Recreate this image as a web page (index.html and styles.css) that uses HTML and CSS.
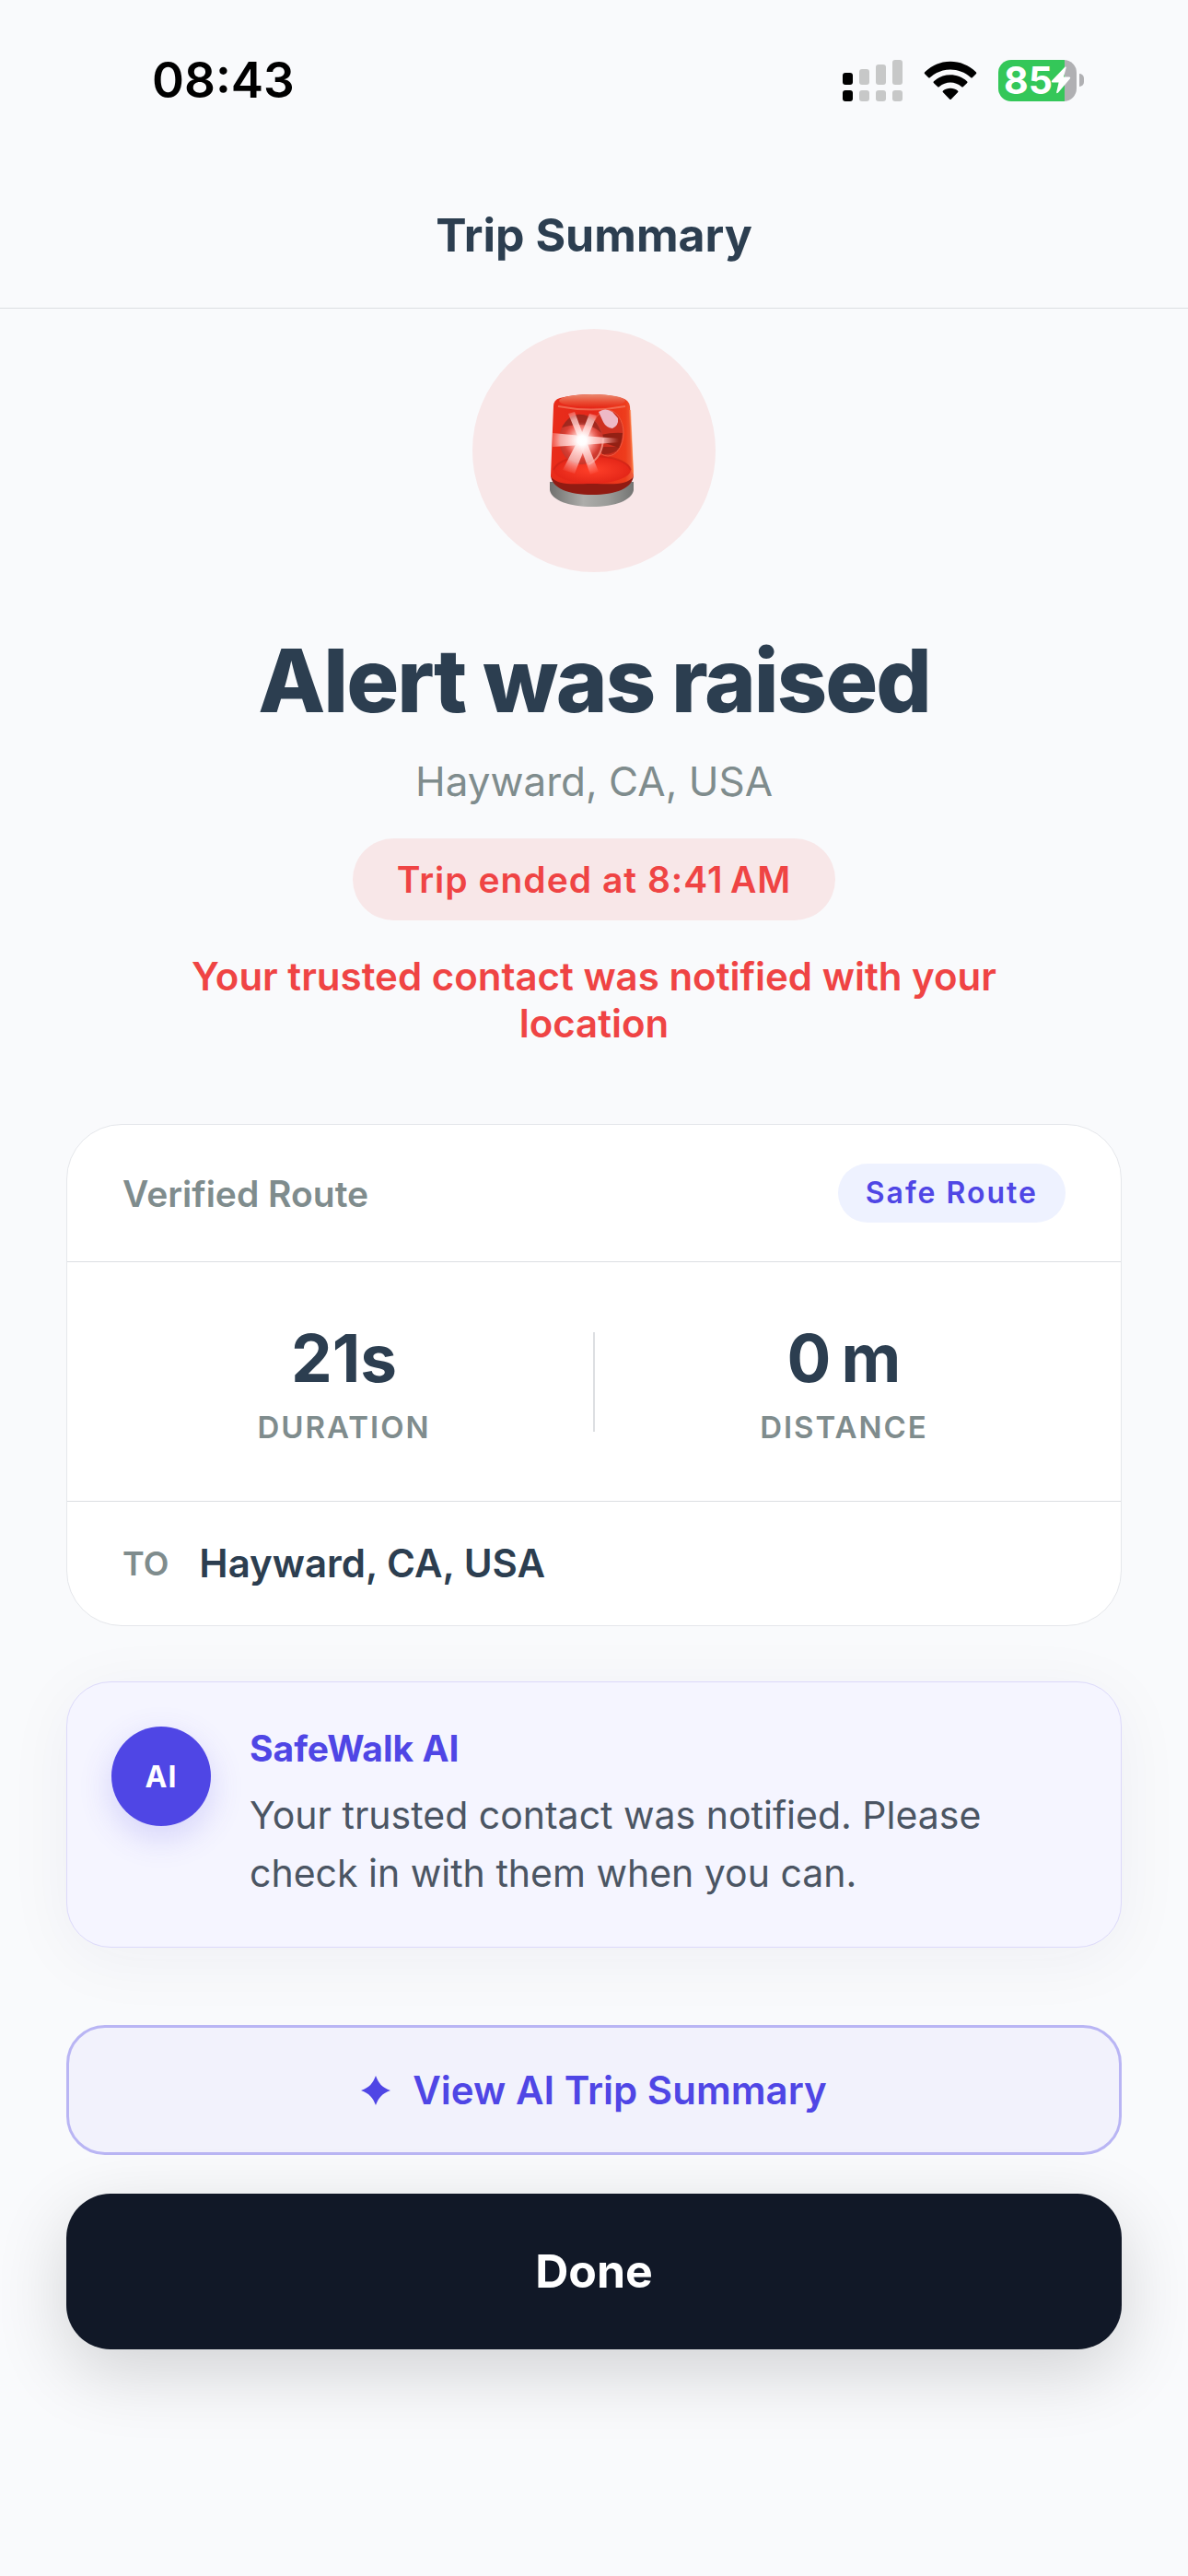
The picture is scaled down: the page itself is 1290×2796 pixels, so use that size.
FILE: index.html
```
<!DOCTYPE html>
<html lang="en">
<head>
    <meta charset="UTF-8">
    <meta name="viewport" content="width=device-width, initial-scale=1.0">
    <title>Trip Summary</title>
    <link rel="stylesheet" href="styles.css">
</head>
<body>
    <!-- Status Bar -->
    <div class="status-bar">
        <span class="time">08:43</span>
        <div class="status-icons">
            <svg class="signal" width="65" height="45" viewBox="0 0 65 45">
                <g fill="#000">
                    <rect x="0" y="14" width="11" height="13" rx="3"/>
                    <rect x="0" y="33" width="11" height="12" rx="3"/>
                </g>
                <g fill="#c7c8c8">
                    <rect x="18" y="10" width="11" height="17" rx="3"/>
                    <rect x="36" y="5" width="11" height="22" rx="3"/>
                    <rect x="54" y="0" width="11" height="27" rx="3"/>
                    <rect x="18" y="33" width="11" height="12" rx="3"/>
                    <rect x="36" y="33" width="11" height="12" rx="3"/>
                    <rect x="54" y="33" width="11" height="12" rx="3"/>
                </g>
            </svg>
            <svg class="wifi" width="58" height="43" viewBox="0 0 58 43">
                <path d="M1.2 12.2C16.500 -3.200 41.500 -3.200 56.800 12.200Q57.800 13.200 56.800 14.200L53 18Q52 19 51 18C38.500 6.500 19.500 6.500 7 18Q6 19 5 18L1.200 14.200Q.200 13.200 1.200 12.200Z"/>
                <path d="M11 22.200C21 13 37 13 47 22.200Q48 23.200 47 24.200L43 28Q42 29 41 28C34 22 24 22 17 28Q16 29 15 28L11 24.200Q10 23.200 11 22.200Z"/>
                <path d="M21 32.400C25.500 28.700 32.500 28.700 37 32.400Q38 33.300 37 34.300L30 41.500Q29 42.500 28 41.500L21 34.300Q20 33.300 21 32.400Z"/>
            </svg>
            <div class="battery">
                <div class="battery-body">
                    <span>85</span>
                    <svg width="22" height="30" viewBox="0 0 22 30"><path d="M15.500.600Q17 0 16.700 1.600L14 11.500H20.400Q22 12 20.800 13.600L7.800 28.800Q6 30 6.200 28L8.600 17.500H1.600Q0 17 1.200 15.400Z" fill="#fff"/></svg>
                </div>
                <div class="battery-tip"></div>
            </div>
        </div>
    </div>

    <!-- Header Section -->
    <header>
        <h1>Trip Summary</h1>
    </header>

    <main>
        <!-- Alert Section -->
        <section class="hero">
            <div class="hero-icon">
                <svg width="94" height="124" viewBox="0 0 94 124">
                    <defs>
                        <linearGradient id="glass" x1="0" x2="1" y1="0" y2="0">
                            <stop offset="0" stop-color="#e92d1a"/>
                            <stop offset=".5" stop-color="#e5271a"/>
                            <stop offset=".9" stop-color="#ee3c1c"/>
                            <stop offset="1" stop-color="#f0603e"/>
                        </linearGradient>
                        <linearGradient id="cap" x1="0" x2="0" y1="0" y2="1">
                            <stop offset="0" stop-color="#ea8a70"/>
                            <stop offset=".6" stop-color="#ea4c33"/>
                            <stop offset="1" stop-color="#e52b18"/>
                        </linearGradient>
                        <linearGradient id="base" x1="0" x2="1" y1="0" y2="0">
                            <stop offset="0" stop-color="#70706e"/>
                            <stop offset=".4" stop-color="#adadaa"/>
                            <stop offset=".7" stop-color="#9a9b98"/>
                            <stop offset="1" stop-color="#747573"/>
                        </linearGradient>
                        <radialGradient id="floor">
                            <stop offset="0" stop-color="#ff4029"/>
                            <stop offset="1" stop-color="#e42618"/>
                        </radialGradient>
                        <radialGradient id="lamp">
                            <stop offset="0" stop-color="#ff9d92"/>
                            <stop offset=".6" stop-color="#e8473c"/>
                            <stop offset="1" stop-color="#c5352a"/>
                        </radialGradient>
                        <radialGradient id="glow">
                            <stop offset="0" stop-color="#fff"/>
                            <stop offset=".25" stop-color="#fff" stop-opacity=".85"/>
                            <stop offset="1" stop-color="#ffb0ab" stop-opacity="0"/>
                        </radialGradient>
                        <radialGradient id="ray" gradientUnits="userSpaceOnUse" cx="36" cy="51" r="40">
                            <stop offset="0" stop-color="#fff"/>
                            <stop offset=".6" stop-color="#ffc5c2" stop-opacity=".8"/>
                            <stop offset="1" stop-color="#ff8d85" stop-opacity="0"/>
                        </radialGradient>
                    </defs>
                    <path d="M1 96V105C3 116 22 123 47 123S90 116 92 105V96Z" fill="url(#base)"/>
                    <path d="M2 88C2 103 22 110 47 110S92 103 92 88Z" fill="#911b12"/>
                    <path d="M5 14Q5 7 12 5Q28 1 46 1Q66 1 79 5Q87 7 88 14L92 90C84 101 66 98 47 98S10 101 2 90Z" fill="url(#glass)"/>
                    <ellipse cx="47" cy="83" rx="42" ry="15" fill="url(#floor)"/>
                    <path d="M5 83Q12 68 47 68Q82 68 89 83" fill="none" stroke="#c32216" stroke-width="2" opacity=".5"/>
                    <ellipse cx="47" cy="8" rx="36" ry="7" fill="url(#cap)"/>
                    <path d="M10 14Q46 21 83 14" fill="none" stroke="#f47a62" stroke-width="2" opacity=".7"/>
                    <ellipse cx="64" cy="43" rx="17" ry="25" fill="#cf3020" stroke="#ee5a40"/>
                    <path d="M56 45Q70 42 80 43Q79 54 76 59L58 53Z" fill="#79190f" opacity=".7"/>
                    <path d="M55 58L77 58Q71 67 58 66Z" fill="#8c2015" opacity=".7"/>
                    <ellipse cx="35" cy="50" rx="24" ry="27" fill="url(#lamp)"/>
                    <path d="M14 37Q25 17 43 25Q52 29 57 43Q43 29 14 37Z" fill="#8b1f15" opacity=".65"/>
                    <path d="M43 77Q58 70 59 49" fill="none" stroke="#ef8577" stroke-width="2"/>
                    <path d="M54 20Q61 15 69 20L75 27Q76 35 69 38Q62 37 59 31Z" fill="#eeb9c6"/>
                    <g fill="url(#ray)">
                        <path d="M36 46L4 43V58L36 56Z"/>
                        <path d="M36 46L78 49V53L36 56Z"/>
                        <path d="M33 51L21 22L28 20L39 50Z"/>
                        <path d="M33 50L44 22L52 24L40 53Z"/>
                        <path d="M32 50L15 83L28 87L41 54Z"/>
                        <path d="M40 50L54 85L45 88L33 54Z"/>
                    </g>
                    <circle cx="36" cy="51" r="20" fill="url(#glow)"/>
                    <path d="M88 18L91 86" stroke="#ff7b3c" stroke-width="2" opacity=".6"/>
                </svg>
            </div>
            <h2>Alert was raised</h2>
            <p class="place">Hayward, CA, USA</p>
            <p class="ended">Trip ended at 8:41&#8201;AM</p>
            <p class="notice">Your trusted contact was notified with your location</p>
        </section>

        <!-- Route Card -->
        <section class="card">
            <div class="card-head">
                <span class="card-title">Verified Route</span>
                <span class="badge">Safe Route</span>
            </div>
            <div class="stats">
                <div class="stat">
                    <span class="value">21s</span>
                    <span class="label">DURATION</span>
                </div>
                <div class="separator"></div>
                <div class="stat">
                    <span class="value">0&#8201;m</span>
                    <span class="label">DISTANCE</span>
                </div>
            </div>
            <div class="destination">
                <span class="to">TO</span>
                <span class="address">Hayward, CA, USA</span>
            </div>
        </section>

        <!-- AI Message -->
        <section class="ai-card">
            <div class="avatar">AI</div>
            <div class="ai-text">
                <h3>SafeWalk AI</h3>
                <p>Your trusted contact was notified. Please check in with them when you can.</p>
            </div>
        </section>

        <!-- Buttons -->
        <button class="summary-btn" type="button">
            <svg width="32" height="32" viewBox="0 0 32 32"><path d="M16 0C19 8 23 13 32 16C23 19 19 24 16 32C13 24 9 19 0 16C9 13 13 8 16 0Z" fill="#4f46e5"/></svg>
            View AI Trip Summary
        </button>
        <button class="done-btn" type="button">Done</button>
    </main>
</body>
</html>
```

FILE: styles.css
```
* {
    box-sizing: border-box;
}
body {
    font-family: Inter, "Liberation Sans", sans-serif;
    margin: 0;
    min-height: 100vh;
    background-color: #f9fafc;
    color: #2c3e50;
}
h1, h2, h3, p {
    margin: 0;
}

/* Status bar */
.status-bar {
    display: flex;
    justify-content: space-between;
    align-items: center;
    height: 177px;
    padding: 0 113px 3px 165px;
}
.time {
    font-size: 53px;
    font-weight: 600;
    color: #000;
}
.status-icons {
    display: flex;
    align-items: center;
    gap: 23px;
}
.battery {
    display: flex;
    align-items: center;
    gap: 3px;
}
.battery-body {
    display: flex;
    align-items: center;
    justify-content: center;
    width: 85px;
    height: 45px;
    border-radius: 14px;
    background: linear-gradient(to right, #34c759 72px, #b0b0b3 72px);
    color: #fff;
    font-size: 41px;
    font-weight: 700;
}
.battery-body svg {
    margin-left: -2px;
}
.battery-tip {
    width: 5px;
    height: 14px;
    border-radius: 0 7px 7px 0;
    background-color: #b0b0b3;
}

/* Header */
header {
    padding: 48px 0;
    border-bottom: 1px solid #dcdfe2;
    text-align: center;
}
h1 {
    font-size: 50px;
    line-height: 61px;
    font-weight: 700;
}

main {
    display: flex;
    flex-direction: column;
    padding: 22px 72px 84px;
}

/* Alert section */
.hero {
    display: flex;
    flex-direction: column;
    align-items: center;
    padding: 0 96px;
    margin-bottom: 84px;
    text-align: center;
}
.hero-icon {
    display: flex;
    align-items: center;
    justify-content: center;
    width: 264px;
    height: 264px;
    padding-right: 4px;
    margin-bottom: 60px;
    border-radius: 50%;
    background-color: #f8e7e8;
}
h2 {
    font-size: 95px;
    line-height: 116px;
    font-weight: 800;
    letter-spacing: -2px;
}
.place {
    margin-top: 24px;
    font-size: 44px;
    line-height: 54px;
    color: #7f8c8d;
}
.ended {
    margin: 35px 0;
    padding: 21px 48px;
    border-radius: 45px;
    background-color: #f8e7e8;
    color: #ef4444;
    font-size: 39px;
    line-height: 47px;
    font-weight: 600;
    letter-spacing: 1px;
}
.notice {
    color: #ef4444;
    font-size: 42px;
    line-height: 51px;
    font-weight: 600;
}

/* Route card */
.card {
    border: 1px solid #e5e7eb;
    border-radius: 60px;
    background-color: #fff;
    margin-bottom: 60px;
}
.card-head {
    display: flex;
    justify-content: space-between;
    align-items: center;
    padding: 42px 60px;
    border-bottom: 1px solid #dcdfe2;
}
.card-title {
    font-size: 39px;
    font-weight: 600;
    color: #7f8c8d;
}
.badge {
    padding: 12px 30px;
    border-radius: 32px;
    background-color: #eef2ff;
    color: #4f46e5;
    font-size: 32px;
    line-height: 40px;
    font-weight: 600;
    letter-spacing: 2px;
}
.stats {
    display: flex;
    align-items: center;
    padding: 61px 30px 60px;
    border-bottom: 1px solid #dcdfe2;
}
.stat {
    flex: 1;
    display: flex;
    flex-direction: column;
    align-items: center;
    gap: 12px;
}
.value {
    font-size: 71px;
    line-height: 86px;
    font-weight: 700;
}
.label {
    font-size: 33px;
    line-height: 40px;
    font-weight: 600;
    letter-spacing: 2px;
    color: #7f8c8d;
}
.separator {
    width: 2px;
    height: 108px;
    background-color: #dcdfe2;
}
.destination {
    display: flex;
    align-items: center;
    gap: 33px;
    padding: 42px 60px;
    line-height: 50px;
    font-weight: 600;
}
.to {
    font-size: 36px;
    color: #7f8c8d;
}
.address {
    font-size: 42px;
}

/* AI message */
.ai-card {
    display: flex;
    align-items: flex-start;
    gap: 42px;
    padding: 48px;
    margin-bottom: 84px;
    border: 1px solid #dcd9fa;
    border-radius: 48px;
    background-color: #f5f5ff;
    box-shadow: 0 12px 72px rgba(30, 30, 80, 0.05);
}
.avatar {
    display: flex;
    flex-shrink: 0;
    align-items: center;
    justify-content: center;
    width: 108px;
    height: 108px;
    border-radius: 50%;
    background-color: #4f46e5;
    box-shadow: 0 12px 36px rgba(79, 70, 229, 0.2);
    color: #fff;
    font-size: 32px;
    font-weight: 700;
    letter-spacing: 1px;
}
h3 {
    margin-bottom: 18px;
    color: #4f46e5;
    font-size: 39px;
    line-height: 47px;
    font-weight: 700;
}
.ai-text p {
    font-size: 41px;
    line-height: 63px;
    color: #4b5563;
}

/* Buttons */
button {
    font-family: inherit;
    cursor: pointer;
}
.summary-btn {
    display: flex;
    align-items: center;
    justify-content: center;
    gap: 24px;
    padding: 42px;
    margin-bottom: 42px;
    border: 3px solid #b9b5f4;
    border-radius: 42px;
    background-color: #f2f2fc;
    color: #4f46e5;
    font-size: 42px;
    line-height: 51px;
    font-weight: 600;
}
.done-btn {
    padding: 54px;
    border: none;
    border-radius: 48px;
    background-color: #111827;
    box-shadow: 0 24px 78px rgba(0, 0, 0, 0.16);
    color: #fff;
    font-size: 50px;
    line-height: 61px;
    font-weight: 700;
}
```
